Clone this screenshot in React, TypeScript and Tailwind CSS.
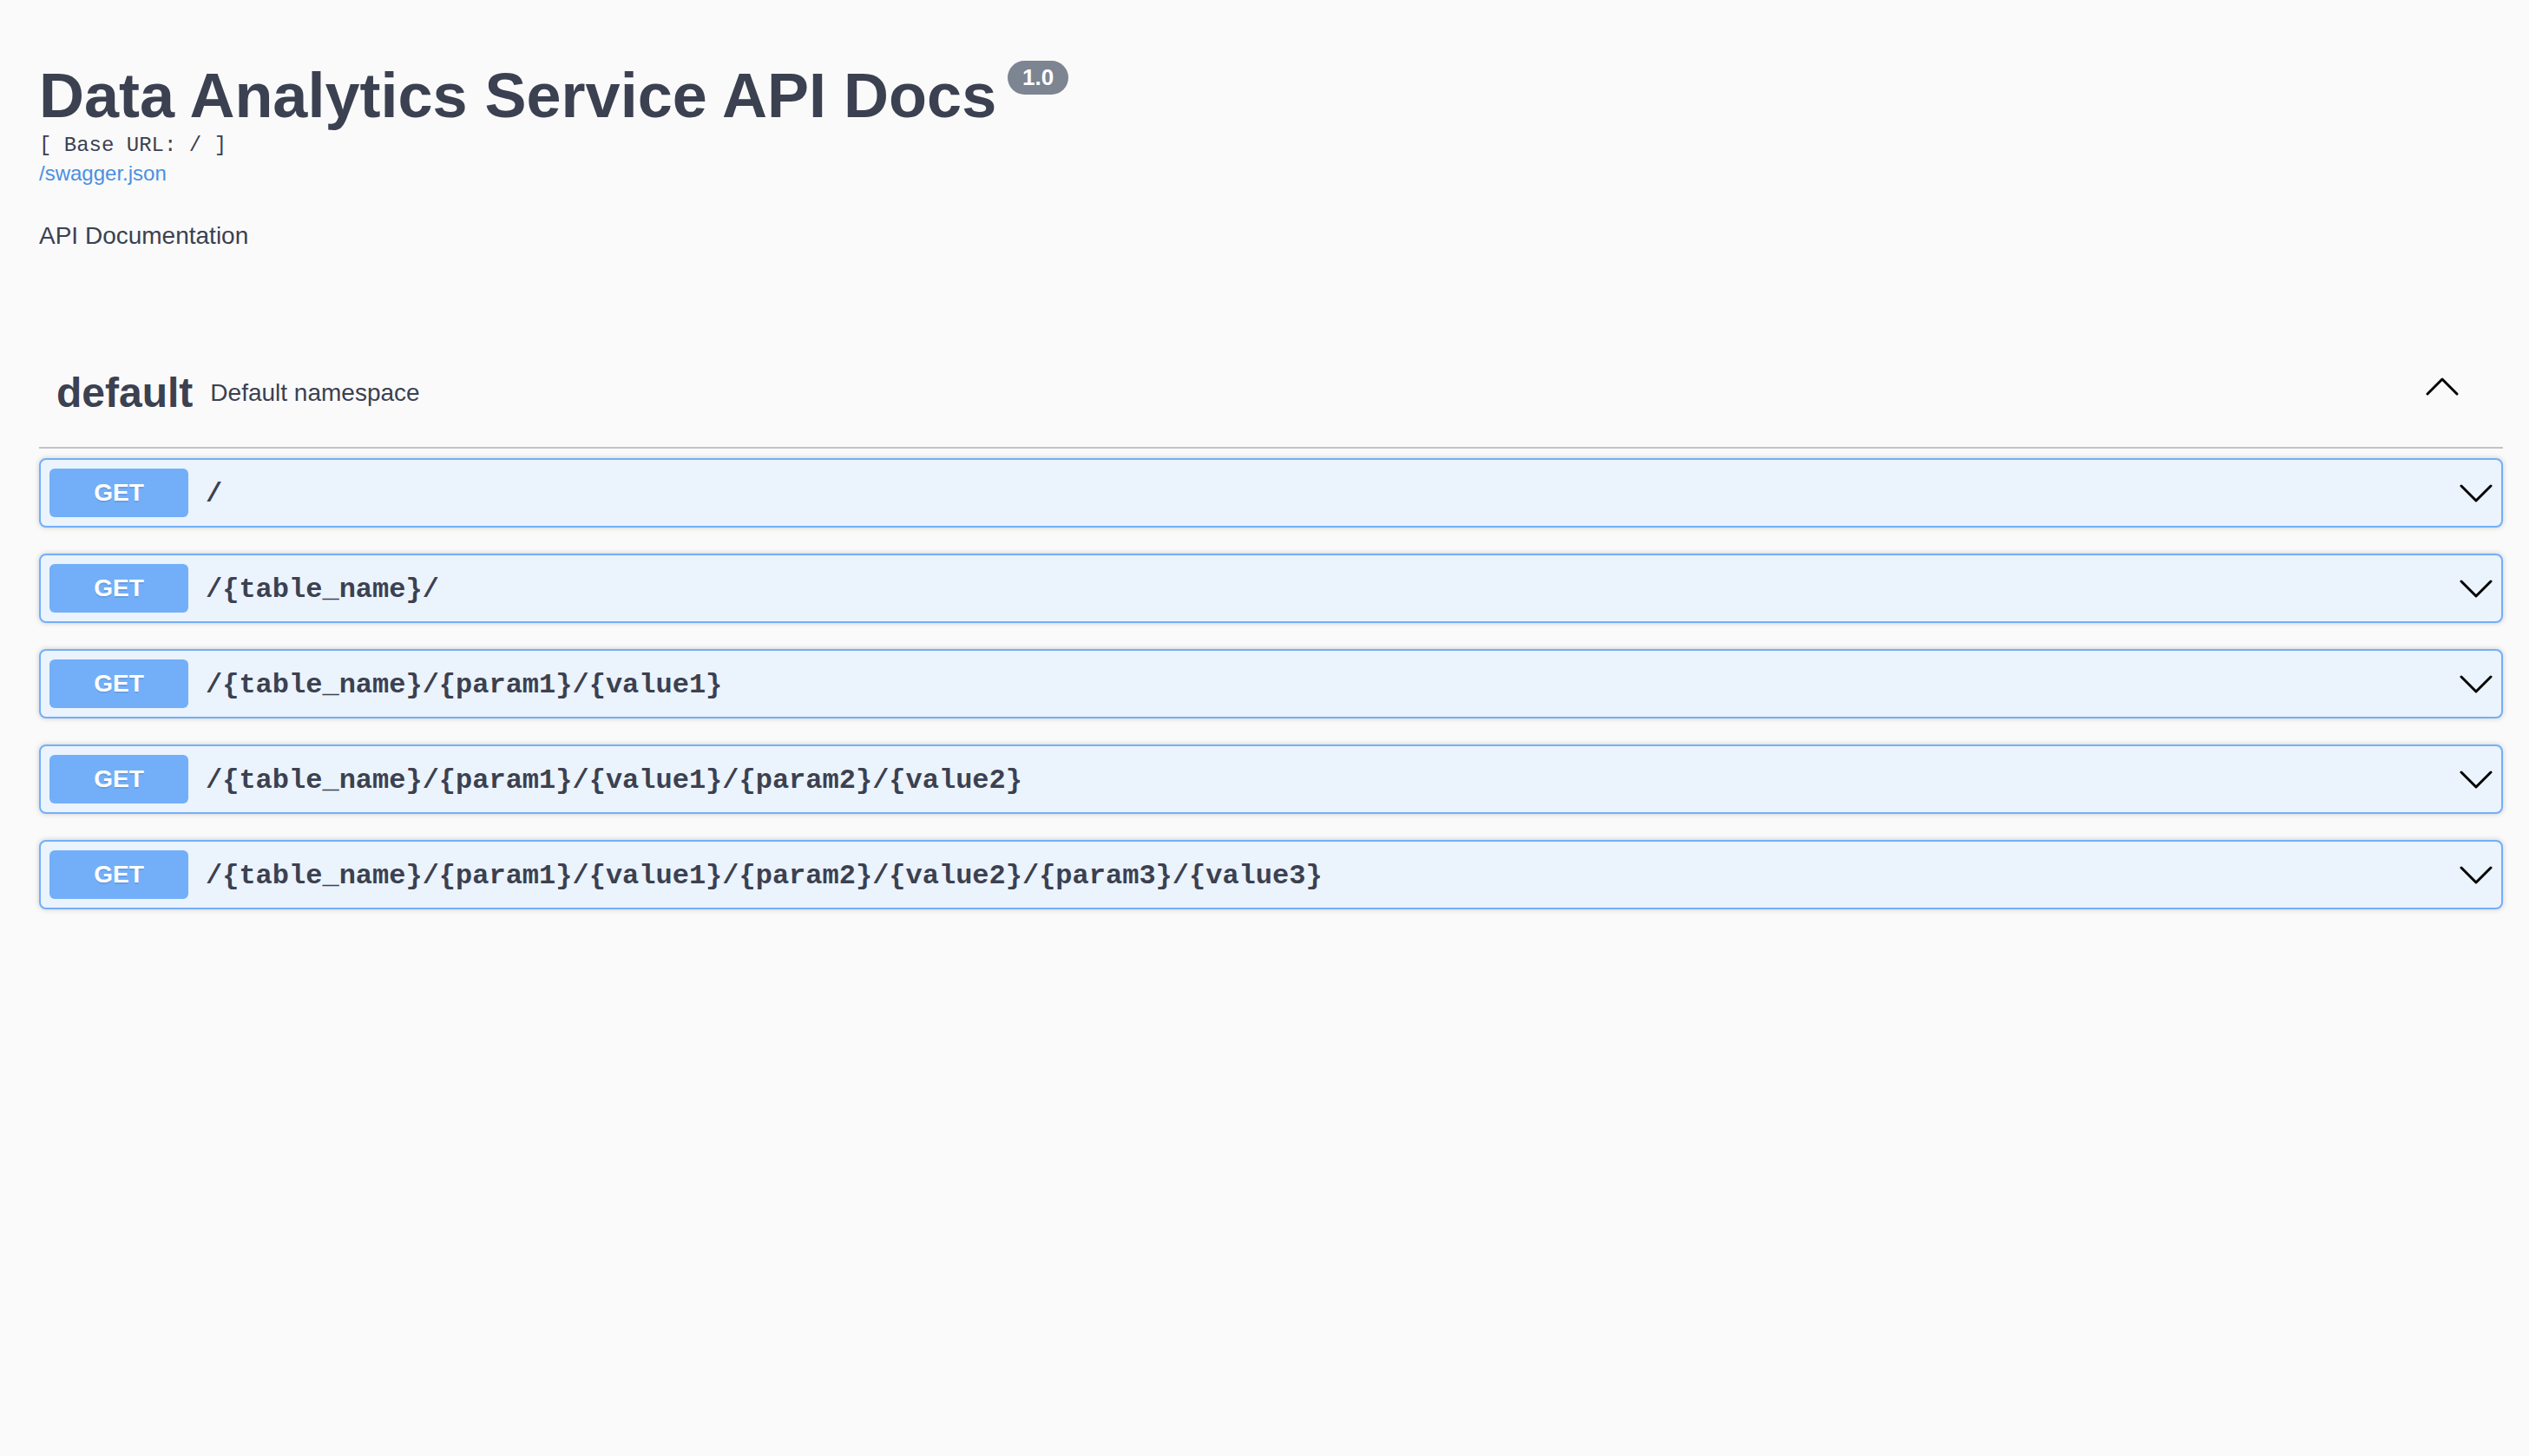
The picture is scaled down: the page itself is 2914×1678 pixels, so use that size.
const sans = "font-['Liberation_Sans',Arial,sans-serif]";
const mono = "font-['Liberation_Mono','Courier_New',monospace]";

const paths = [
  '/',
  '/{table_name}/',
  '/{table_name}/{param1}/{value1}',
  '/{table_name}/{param1}/{value1}/{param2}/{value2}',
  '/{table_name}/{param1}/{value1}/{param2}/{value2}/{param3}/{value3}',
];

function Chevron({ up }: { up?: boolean }) {
  return (
    <svg width="40" height="24" viewBox="0 0 40 24" className="shrink-0">
      <polyline
        points={up ? '3,20 20,3 37,20' : '4,4 21,21 38,4'}
        fill="none"
        stroke="#000"
        strokeWidth="3"
        strokeLinecap="round"
        strokeLinejoin="round"
      />
    </svg>
  );
}

function OpBlock({ path }: { path: string }) {
  return (
    <div className="mb-[30px] rounded-[8px] border-2 border-[#73aff9] bg-[#ebf3fc] shadow-[0_0_6px_rgba(0,0,0,0.19)]">
      <div className="flex items-center p-[10px]">
        <div
          className={`${sans} flex h-[56px] w-[160px] shrink-0 items-center justify-center rounded-[6px] bg-[#73aff9] text-[28px] font-bold text-white [text-shadow:0_2px_0_rgba(0,0,0,0.1)]`}
        >
          GET
        </div>
        <div className={`${mono} mt-[3px] flex-1 px-[20px] text-[32px] font-bold leading-[40px] text-[#3b4151]`}>
          {path}
        </div>
        <Chevron />
      </div>
    </div>
  );
}

export default function App() {
  return (
    <div className="min-h-screen bg-[#fafafa] pl-[45px] pr-[30px] pt-[74px] text-[#3b4151]">
      {/* Info */}
      <div className="flex items-start">
        <h2 className={`${sans} h-[72px] text-[72px] font-bold leading-[72px]`}>
          Data Analytics Service API Docs
        </h2>
        <span
          className={`${sans} ml-[13px] mt-[-4px] flex h-[39px] w-[70px] items-center justify-center rounded-full bg-[#7d8492] text-[26px] font-bold text-white`}
        >
          1.0
        </span>
      </div>
      <div className={`${mono} mt-[8px] text-[24px] leading-[28px]`}>[ Base URL: / ]</div>
      <a className={`${sans} mt-[4px] block text-[24px] leading-[28px] text-[#4990e2]`}>/swagger.json</a>
      <p className={`${sans} mt-[42px] text-[28px] leading-[32px]`}>API Documentation</p>

      {/* Tag section */}
      <div className="mt-[98px] flex flex-col">
        <div className="mb-[11px] flex items-center border-b-2 border-[rgba(59,65,81,0.3)] py-[20px] pl-[20px] pr-[50px]">
          <div className="flex h-[89px] flex-1 items-center pt-[4px]">
            <h3 className={`${sans} text-[48px] font-bold leading-[56px]`}>default</h3>
            <small className={`${sans} px-[20px] text-[28px] leading-[32px]`}>Default namespace</small>
          </div>
          <div className="mb-[10px]">
            <Chevron up />
          </div>
        </div>
        {paths.map((p) => (
          <OpBlock key={p} path={p} />
        ))}
      </div>
    </div>
  );
}
